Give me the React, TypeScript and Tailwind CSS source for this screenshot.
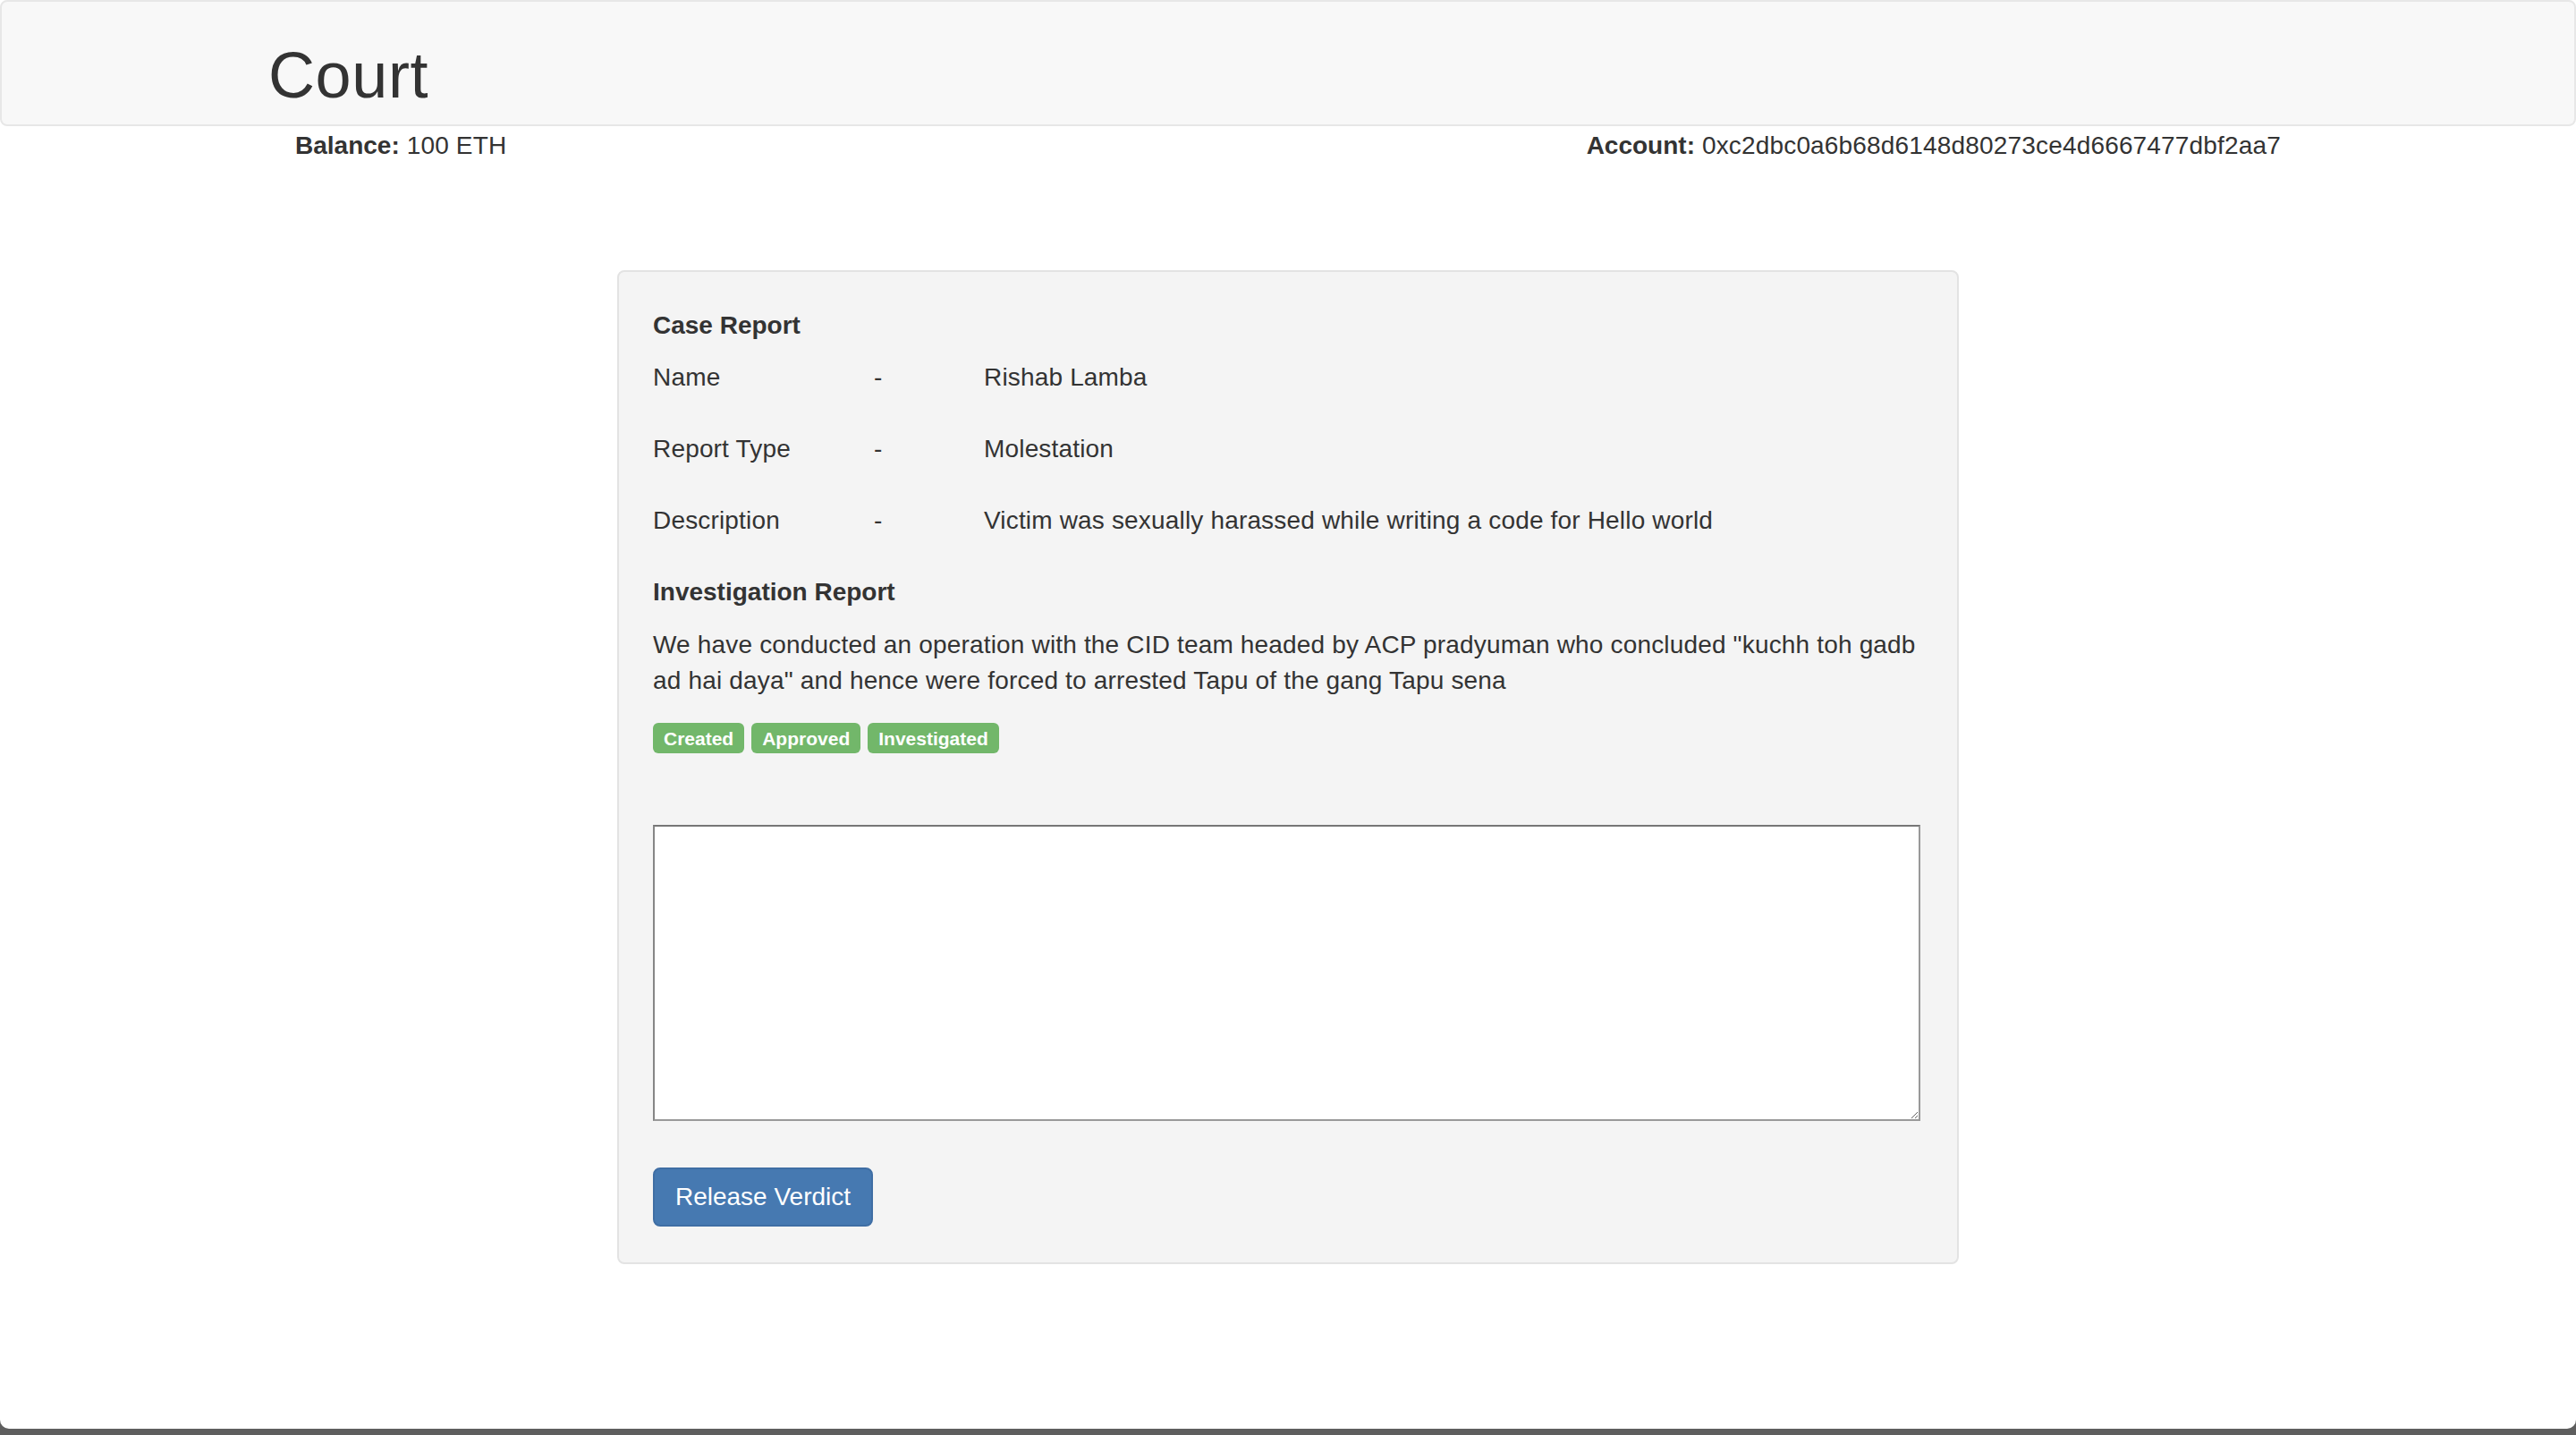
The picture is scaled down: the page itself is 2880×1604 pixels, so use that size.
import React from 'react';

const rows = [
  { label: 'Name', value: 'Rishab Lamba' },
  { label: 'Report Type', value: 'Molestation' },
  { label: 'Description', value: 'Victim was sexually harassed while writing a code for Hello world' },
];

const statuses = ['Created', 'Approved', 'Investigated'];

export default function App() {
  return (
    <div className="h-[1604px] bg-[#5e5e5e] font-['Liberation_Sans',Arial,sans-serif] text-[#333]">
      <div className="h-[1597px] bg-white rounded-b-[10px] overflow-hidden">
        <nav className="h-[141px] bg-[#f8f8f8] border-2 border-[#e7e7e7] rounded-[8px]">
          <div className="w-[2340px] mx-auto px-[30px] pt-[43px]">
            <h1 className="text-[72px] leading-[1.1] font-normal tracking-[0.6px]">Court</h1>
          </div>
        </nav>

        <div className="w-[2340px] mx-auto px-[30px] pt-[2px]">
          <div className="flex justify-between px-[30px] h-[40px] text-[28px] leading-[40px] tracking-[0.17px]">
            <div>
              <span className="font-bold tracking-normal">Balance:</span> 100 ETH
            </div>
            <div>
              <span className="font-bold tracking-normal">Account:</span> 0xc2dbc0a6b68d6148d80273ce4d6667477dbf2aa7
            </div>
          </div>
        </div>

        <div className="w-[1500px] mx-auto mt-[119px] bg-[#f4f4f4] border-2 border-[#e3e3e3] rounded-[8px] px-[38px] pt-[40px] pb-[40px] text-[28px] leading-[40px] tracking-[0.17px]">
          <div className="font-bold tracking-normal">Case Report</div>

          <div className="mt-[18px] flex flex-col gap-[40px]">
            {rows.map((r) => (
              <div key={r.label} className="flex">
                <div className="w-[247px]">{r.label}</div>
                <div className="w-[123px]">-</div>
                <div>{r.value}</div>
              </div>
            ))}
          </div>

          <div className="mt-[40px] font-bold tracking-normal">Investigation Report</div>
          <p className="mt-[19px]">
            <span className="block whitespace-nowrap">
              We have conducted an operation with the CID team headed by ACP pradyuman who concluded "kuchh toh gadb
            </span>
            <span className="block whitespace-nowrap">
              ad hai daya" and hence were forced to arrested Tapu of the gang Tapu sena
            </span>
          </p>

          <div className="mt-[27px] flex gap-[8px] tracking-normal">
            {statuses.map((s) => (
              <span
                key={s}
                className="h-[34px] px-[12px] flex items-center bg-[#72b76a] text-white text-[21px] font-bold leading-none rounded-[6px]"
              >
                {s}
              </span>
            ))}
          </div>

          <textarea
            className="block mt-[80px] w-[1417px] h-[331px] bg-white border-2 border-t-[#767676] border-l-[#868686] border-r-[#999] border-b-[#999] outline-none"
          />

          <button className="mt-[52px] w-[246px] h-[66px] bg-[#4679b1] border-2 border-[#3f6ea4] rounded-[8px] text-white text-[28px] leading-[40px] tracking-normal">
            Release Verdict
          </button>
        </div>
      </div>
    </div>
  );
}
